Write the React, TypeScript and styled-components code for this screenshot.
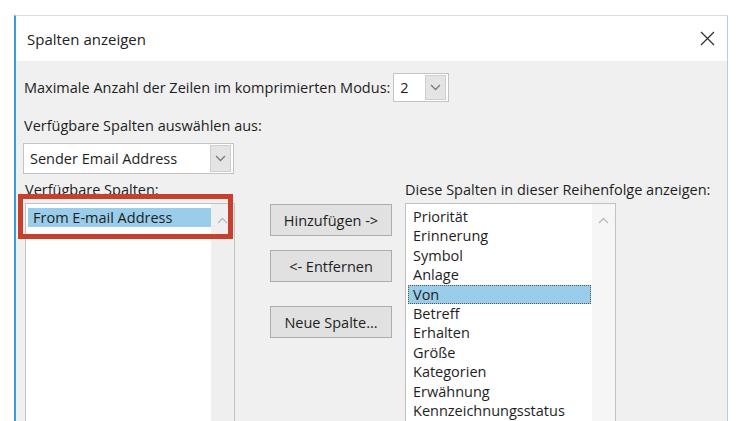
import React from "react";
import styled, { createGlobalStyle } from "styled-components";

const Global = createGlobalStyle`
  html, body { margin: 0; padding: 0; background: #ffffff; }
  body { font-family: "Open Sans", "Noto Sans", sans-serif; color: #1e1e1e; }
  * { box-sizing: border-box; }
`;

const Page = styled.div`
  width: 750px;
  height: 421px;
  overflow: hidden;
  padding: 15px 22px 0 14px;
  background: #ffffff;
`;

const Dialog = styled.div`
  height: 406px;
  display: flex;
  flex-direction: column;
  border-left: 2px solid #3f9bd6;
  border-top: 1px solid #d6dde3;
  border-right: 1px solid #a9d2ec;
  font-size: 14.5px;
`;

const TitleBar = styled.div`
  height: 45px;
  flex: none;
  background: #ffffff;
  display: flex;
  align-items: center;
  justify-content: space-between;
  padding: 0 12px 0 11px;
  font-size: 15px;
  color: #222;
`;

const Body = styled.div`
  flex: 1;
  background: #f0f0f0;
  padding: 12px 0 0 8px;
  display: flex;
  flex-direction: column;
  overflow: hidden;
`;

const Row = styled.div<{ $h: number; $pt?: number }>`
  height: ${(p) => p.$h}px;
  padding-top: ${(p) => p.$pt ?? 0}px;
  display: flex;
  align-items: center;
  flex: none;
`;

const Combo = styled.div<{ $w: number; $h: number; $ml: number }>`
  width: ${(p) => p.$w}px;
  height: ${(p) => p.$h}px;
  margin-left: ${(p) => p.$ml}px;
  background: #ffffff;
  border: 1px solid #c4c4c4;
  display: flex;
  align-items: center;
  justify-content: space-between;
  padding: 1px 2px 1px 6px;
`;

const ComboBtn = styled.div`
  width: 21px;
  align-self: stretch;
  background: #e4e4e4;
  border: 1px solid #cfcfcf;
  display: flex;
  align-items: center;
  justify-content: center;
`;

const Main = styled.div`
  display: grid;
  grid-template-columns: 210px 170px 211px;
  margin-left: 1px;
  flex: 1;
`;

const Column = styled.div`
  display: flex;
  flex-direction: column;
  position: relative;
`;

const Label = styled.div`
  height: 26px;
  padding-top: 4px;
  display: flex;
  align-items: center;
  white-space: nowrap;
`;

const List = styled.div`
  flex: 1;
  margin-top: 3px;
  background: #ffffff;
  border: 1px solid #c2c2c2;
  border-bottom: none;
  display: grid;
  grid-template-columns: 1fr 23px;
  padding: 3px 0 0 1px;
`;

const Items = styled.div`
  display: flex;
  flex-direction: column;
  line-height: 19.4px;
  padding-left: 1px;
`;

const Item = styled.div<{ $sel?: boolean }>`
  padding-left: 5px;
  background: ${(p) => (p.$sel ? "#99cde9" : "transparent")};
  outline: ${(p) => (p.$sel ? "1px dotted #555" : "none")};
  outline-offset: -1px;
  margin-right: 1px;
  white-space: nowrap;
`;

const LeftItem = styled.div`
  background: #9acde9;
  height: 19px;
  line-height: 19px;
  padding-left: 5px;
  margin: 1px 0 0 1px;
  white-space: nowrap;
`;

const Scroll = styled.div<{ $bg: string }>`
  background: ${(p) => p.$bg};
  margin-top: -3px;
  display: flex;
  justify-content: center;
  padding-top: 13px;
`;

const Highlight = styled.div`
  position: absolute;
  left: -7px;
  top: 20px;
  width: 215px;
  height: 45px;
  border: 5px solid #c8402b;
  pointer-events: none;
`;

const Buttons = styled.div`
  display: flex;
  flex-direction: column;
  padding: 30px 0 0 35px;
  gap: 14px;
`;

const Btn = styled.div<{ $mt?: number }>`
  width: 122px;
  height: 32px;
  margin-top: ${(p) => p.$mt ?? 0}px;
  background: #e1e1e1;
  border: 1px solid #adadad;
  display: flex;
  align-items: center;
  justify-content: center;
  white-space: nowrap;
`;

const Chevron = ({ up }: { up?: boolean }) => (
  <svg width="11" height="7" viewBox="0 0 11 7">
    <path
      d={up ? "M1 6 L5.5 1.5 L10 6" : "M1 1 L5.5 5.5 L10 1"}
      fill="none"
      stroke={up ? "#b9b9b9" : "#7a7a7a"}
      strokeWidth="1.3"
    />
  </svg>
);

const CloseX = () => (
  <svg width="15" height="15" viewBox="0 0 15 15">
    <path d="M1 1 L14 14 M14 1 L1 14" stroke="#333" strokeWidth="1.3" />
  </svg>
);

const rightItems = [
  "Priorität",
  "Erinnerung",
  "Symbol",
  "Anlage",
  "Von",
  "Betreff",
  "Erhalten",
  "Größe",
  "Kategorien",
  "Erwähnung",
  "Kennzeichnungsstatus",
];

export default function App() {
  return (
    <>
      <Global />
      <Page>
        <Dialog>
          <TitleBar>
            <span>Spalten anzeigen</span>
            <CloseX />
          </TitleBar>
          <Body>
            <Row $h={29}>
              <span>Maximale Anzahl der Zeilen im komprimierten Modus:</span>
              <Combo $w={56} $h={29} $ml={3}>
                <span>2</span>
                <ComboBtn>
                  <Chevron />
                </ComboBtn>
              </Combo>
            </Row>
            <Row $h={41} $pt={6}>
              <span>Verfügbare Spalten auswählen aus:</span>
            </Row>
            <Row $h={31}>
              <Combo $w={211} $h={31} $ml={-1}>
                <span>Sender Email Address</span>
                <ComboBtn>
                  <Chevron />
                </ComboBtn>
              </Combo>
            </Row>
            <Main>
              <Column>
                <Label>Verfügbare Spalten:</Label>
                <List>
                  <div>
                    <LeftItem>From E-mail Address</LeftItem>
                  </div>
                  <Scroll $bg="#efefef">
                    <Chevron up />
                  </Scroll>
                </List>
                <Highlight />
              </Column>
              <Buttons>
                <Btn>Hinzufügen -&gt;</Btn>
                <Btn>&lt;- Entfernen</Btn>
                <Btn $mt={10}>Neue Spalte...</Btn>
              </Buttons>
              <Column>
                <Label>Diese Spalten in dieser Reihenfolge anzeigen:</Label>
                <List>
                  <Items>
                    {rightItems.map((t) => (
                      <Item key={t} $sel={t === "Von"}>
                        {t}
                      </Item>
                    ))}
                  </Items>
                  <Scroll $bg="#f6f6f6">
                    <Chevron up />
                  </Scroll>
                </List>
              </Column>
            </Main>
          </Body>
        </Dialog>
      </Page>
    </>
  );
}
